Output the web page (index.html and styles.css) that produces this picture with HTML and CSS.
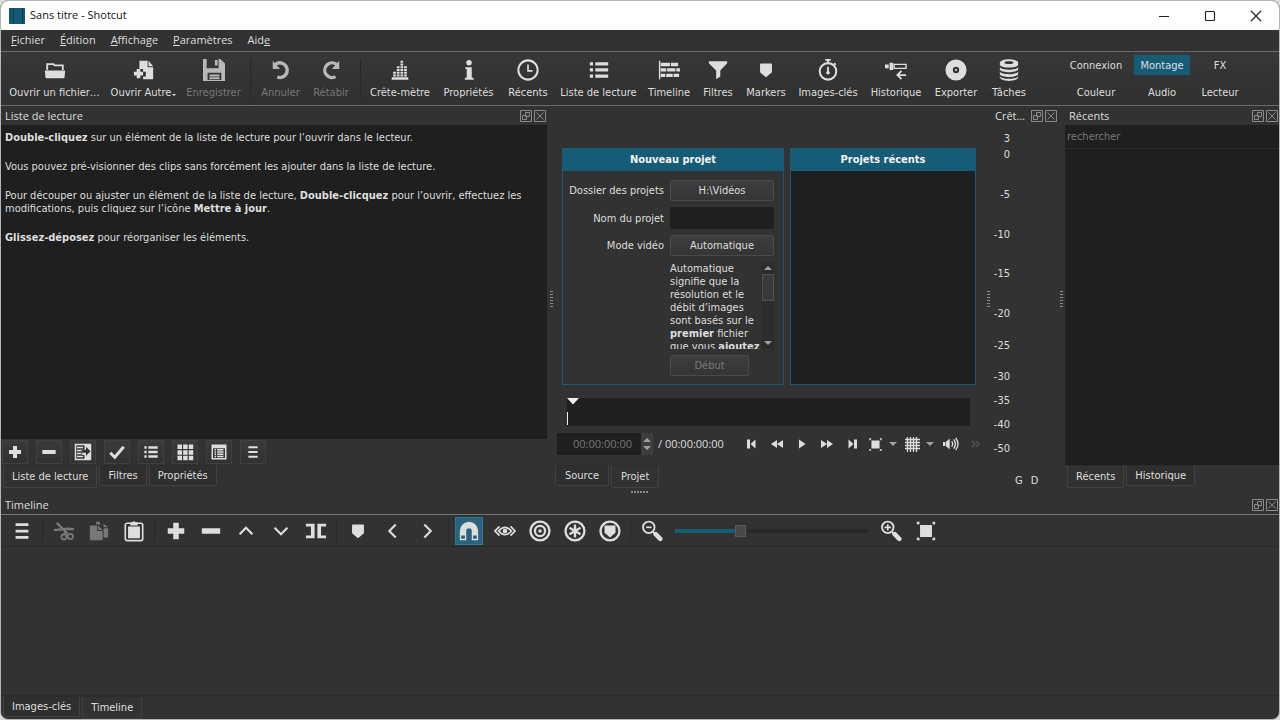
FILE: index.html
```html
<!DOCTYPE html>
<html lang="fr">
<head>
<meta charset="utf-8">
<title>Sans titre - Shotcut</title>
<link rel="stylesheet" href="styles.css">
</head>
<body>
<svg class="sprite" aria-hidden="true">
  <symbol id="float" viewBox="0 0 12 12"><path d="M.5.5h11v11H.5z M5.500 2.500h4v4h-4z M2.500 5.500h4v4h-4z" fill="none" stroke="currentColor"/></symbol>
  <symbol id="close" viewBox="0 0 12 12"><path d="M.5.5h11v11H.5z M2.500 2.500l7 7 M9.500 2.500l-7 7" fill="none" stroke="currentColor"/></symbol>
  <symbol id="plus" viewBox="0 0 24 24"><path d="M9 3h6v6h6v6h-6v6H9v-6H3V9h6z"/></symbol>
  <symbol id="minus" viewBox="0 0 24 24"><path d="M2 9h20v6H2z"/></symbol>
  <symbol id="bars" viewBox="0 0 24 24"><path d="M5 3.500h14v3H5z M5 10.500h14v3H5z M5 17.500h14v3H5z"/></symbol>
  <symbol id="list" viewBox="0 0 24 24"><path d="M2 3.500h3.500v3.500H2z M8 3.500h14v3.500H8z M2 10.200h3.500v3.500H2z M8 10.200h14v3.500H8z M2 17h3.500v3.500H2z M8 17h14v3.500H8z"/></symbol>
  <symbol id="marker" viewBox="0 0 24 24"><path d="M6.500 5h11a1 1 0 0 1 1 1v8.500L12 20l-6.500-5.500V6a1 1 0 0 1 1-1z"/></symbol>
  <symbol id="fit" viewBox="0 0 24 24"><path d="M5.500 5.500h13v13h-13z M2 2h3v2H4v1H2z M22 2h-3v2h1v1h2z M2 22h3v-2H4v-1H2z M22 22h-3v-2h1v-1h2z"/></symbol>
  <symbol id="dots" viewBox="0 0 3 18"><path d="M0 1h3v1H0z M0 4h3v1H0z M0 7h3v1H0z M0 10h3v1H0z M0 13h3v1H0z M0 16h3v1H0z"/></symbol>
</svg>
<div class="window">
  <header class="titlebar">
    <svg class="logo" viewBox="0 0 16 16"><path d="M0 0h16v16H0z" fill="#155a74"/><path d="M4.500 0v16 M13.500 0v16" stroke="#0d3a4c"/><path d="M1 3h2 M1 6h2 M1 9h2 M1 12h2" stroke="#0d3a4c"/></svg>
    <h1>Sans titre - Shotcut</h1>
    <div class="wincontrols">
      <button aria-label="Réduire"><svg viewBox="0 0 12 12"><path d="M1 6.500h10"/></svg></button>
      <button aria-label="Agrandir"><svg viewBox="0 0 12 12"><rect x="1.500" y="1.500" width="9" height="9" rx="1"/></svg></button>
      <button aria-label="Fermer"><svg viewBox="0 0 12 12"><path d="M1 1l10 10M11 1L1 11"/></svg></button>
    </div>
  </header>
  <nav class="menubar">
    <button><u>F</u>ichier</button><button><u>É</u>dition</button><button><u>A</u>ffichage</button><button><u>P</u>aramètres</button><button>Aid<u>e</u></button>
  </nav>
  <div class="toolbar">
    <div class="tools">
      <button><svg viewBox="0 0 24 24"><path d="M1 12.500h22l-.5 7a1.500 1.500 0 0 1-1.500 1.500H3a1.500 1.500 0 0 1-1.500-1.500z"/><path d="M3.500 12V5.500h7l1 1.500h9V12" fill="none" stroke="currentColor" stroke-width="2"/></svg>Ouvrir un fichier…</button>
      <button><svg viewBox="0 0 24 24"><path d="M7 2h9v7h6v13H11v-3h3v-5h-3v-3H7z M17 2l5 6h-5z M4 11h4v3h3v4H8v3H4v-3H1v-4h3z"/></svg><span>Ouvrir Autre<i class="more"></i></span></button>
      <button disabled><svg viewBox="0 0 24 24"><path d="M0 0h4v10H17V0h2l5 5v19h-4v-9H5v9H0z M13 1h3v6h-3z M7 17h11v2H7z M7 20h11v2H7z M5 23h15v1H5z"/></svg>Enregistrer</button>
      <span class="sep"></span>
      <button disabled><svg viewBox="0 0 24 24"><path d="M6 5.800A8 8 0 1 1 8 19.700" fill="none" stroke="currentColor" stroke-width="3.600"/><path d="M3 2v9h8z"/></svg>Annuler</button>
      <button disabled><svg viewBox="0 0 24 24"><path d="M18 5.800A8 8 0 1 0 17 19.200" fill="none" stroke="currentColor" stroke-width="3.600"/><path d="M21 2v9h-8z"/></svg>Rétabir</button>
      <span class="sep"></span>
      <button><svg viewBox="0 0 24 24"><path d="M3 20h18v2.500H3z"/><path d="M6 19V13 M10 19V8 M14 19V2 M18 19V7" stroke="currentColor" stroke-width="3" stroke-dasharray="2 1" fill="none"/></svg>Crête-mètre</button>
      <button><svg viewBox="0 0 24 24"><circle cx="12" cy="4" r="3"/><path d="M8 9h7v11.500H17v2H7.500v-2H9.500V11H8z"/></svg>Propriétés</button>
      <button><svg viewBox="0 0 24 24"><circle cx="12" cy="12" r="10.500" fill="none" stroke="currentColor" stroke-width="2.200"/><path d="M12 6v7h5" fill="none" stroke="currentColor" stroke-width="1.800"/></svg>Récents</button>
      <button><svg><use href="#list"/></svg>Liste de lecture</button>
      <button><svg viewBox="0 0 24 24"><path d="M1 2h1.500v20H1z M3 4h10v4H3z M14 4h8v4h-8z M3 10h6v3.500H3z M10 10h9v3.500h-9z M20 10h4v3.500h-4z M3 16h5v3.500H3z M9 16h7v3.500H9z M17 16h6v3.500h-6z"/></svg>Timeline</button>
      <button><svg viewBox="0 0 24 24"><path d="M2 2.500h20v2l-7.500 8V19L10 22V12.500L2 4.500z"/></svg>Filtres</button>
      <button><svg><use href="#marker"/></svg>Markers</button>
      <button><svg viewBox="0 0 24 24"><path d="M9 1h6 M12 1v4 M18.500 4.500l2 2" stroke="currentColor" stroke-width="2"/><circle cx="12" cy="13.500" r="9" fill="none" stroke="currentColor" stroke-width="2.200"/><path d="M12 8.500v6" stroke="currentColor" stroke-width="2"/><circle cx="12" cy="15" r="2"/></svg>Images-clés</button>
      <button><svg viewBox="0 0 24 24"><path d="M0 6h4v4H0z M5 4h4v8H5z"/><path d="M10 5.800h13v4.400H10z" fill="none" stroke="currentColor" stroke-width="1.500"/><path d="M23 17.500h-8 M18 13l-4.500 4.500L18 22" fill="none" stroke="currentColor" stroke-width="2"/></svg>Historique</button>
      <button><svg viewBox="0 0 24 24"><path fill-rule="evenodd" d="M12 .500a11.500 11.500 0 1 0 0 23a11.500 11.500 0 1 0 0-23z M12 8.500a3.500 3.500 0 1 1 0 7a3.500 3.500 0 1 1 0-7z"/><circle cx="12" cy="12" r="1.200"/></svg>Exporter</button>
      <button><svg viewBox="0 0 24 24"><path fill-rule="evenodd" d="M2 4.500c0-5.500 20-5.500 20 0v1.500c0 4.500-20 4.500-20 0z M7 4c0 2 10 2 10 0s-10-2-10 0z"/><path d="M2 9c2 3.500 18 3.500 20 0v2.500c-2 4-18 4-20 0z M2 14c2 3.500 18 3.500 20 0v2.500c-2 4-18 4-20 0z M2 19c2 3.500 18 3.500 20 0v1.500c-2 4.500-18 4.500-20 0z"/></svg>Tâches</button>
    </div>
    <div class="layouts">
      <button>Connexion</button><button class="on">Montage</button><button>FX</button>
      <button>Couleur</button><button>Audio</button><button>Lecteur</button>
    </div>
  </div>

  <main class="docks">
    <section class="dock">
      <div class="dockhead"><h2>Liste de lecture</h2><button aria-label="Détacher"><svg><use href="#float"/></svg></button><button aria-label="Fermer"><svg><use href="#close"/></svg></button></div>
      <div class="playlist">
        <p><b>Double-cliquez</b> sur un élément de la liste de lecture pour l’ouvrir dans le lecteur.</p>
        <p>Vous pouvez pré-visionner des clips sans forcément les ajouter dans la liste de lecture.</p>
        <p>Pour découper ou ajuster un élément de la liste de lecture, <b>Double-clicquez</b> pour l’ouvrir, effectuez les<br>modifications, puis cliquez sur l’icône <b>Mettre à jour</b>.</p>
        <p><b>Glissez-déposez</b> pour réorganiser les éléments.</p>
      </div>
      <div class="listbuttons">
        <button aria-label="Ajouter"><svg><use href="#plus"/></svg></button>
        <button aria-label="Retirer"><svg><use href="#minus"/></svg></button>
        <button aria-label="Mettre à jour"><svg viewBox="0 0 24 24"><path fill-rule="evenodd" d="M1 1h22v22H1z M3 3v18h11v-5h-3V9h3V3z"/><path d="M4 6h8 M4 10h6 M4 14h6 M4 18h8" stroke="currentColor" stroke-width="2"/><path d="M11 9h5V5l6 6-6 6v-4h-5z" fill="#323232"/></svg></button>
        <button aria-label="Valider"><svg viewBox="0 0 24 24"><path d="M3 13l6 6L21 5" fill="none" stroke="currentColor" stroke-width="4"/></svg></button>
        <button aria-label="Détails"><svg><use href="#list"/></svg></button>
        <button aria-label="Icônes"><svg viewBox="0 0 24 24"><path d="M2 2h6v6H2z M9.500 2h6v6h-6z M17 2h6v6h-6z M2 9.500h6v6H2z M9.500 9.500h6v6h-6z M17 9.500h6v6h-6z M2 17h6v6H2z M9.500 17h6v6h-6z M17 17h6v6h-6z"/></svg></button>
        <button aria-label="Tableau"><svg viewBox="0 0 24 24"><path fill-rule="evenodd" d="M2 2h20v20H2z M4 7v13h16V7z"/><path d="M6 9h2 M9.500 9H18 M6 12h2 M9.500 12H18 M6 15h2 M9.500 15H18 M6 18h2 M9.500 18H18" stroke="currentColor" stroke-width="2"/></svg></button>
        <button aria-label="Menu"><svg><use href="#bars"/></svg></button>
      </div>
      <div class="tabs"><button class="on">Liste de lecture</button><button>Filtres</button><button>Propriétés</button></div>
    </section>
    <div class="split"><svg><use href="#dots"/></svg></div>
    <section class="player">
      <div class="projects">
        <form class="card" onsubmit="return false">
          <h2>Nouveau projet</h2>
          <div class="fields">
            <label for="dir">Dossier des projets</label><button id="dir">H:\Vidéos</button>
            <label for="name">Nom du projet</label><input id="name" type="text">
            <label for="mode">Mode vidéo</label><button id="mode">Automatique</button>
            <div class="help">
              <p>Automatique<br>signifie que la<br>résolution et le<br>débit d’images<br>sont basés sur le<br><b>premier</b> fichier<br>que vous <b>ajoutez</b></p>
              <div class="scroll"><i class="up"></i><i class="thumb"></i><i class="down"></i></div>
            </div>
            <button class="start" disabled>Début</button>
          </div>
        </form>
        <div class="card recent"><h2>Projets récents</h2></div>
      </div>
      <div class="scrub"><svg viewBox="0 0 12 28"><path d="M0 0h12L6 6.500z M0 14h1v13H0z"/></svg></div>
      <div class="transport">
        <span class="time"><input type="text" value="00:00:00:00" aria-label="Position" disabled><span class="spin"><i class="up"></i><i class="down"></i></span></span>
        <span class="total">/ 00:00:00:00</span>
        <div class="play">
          <button aria-label="Début"><svg viewBox="0 0 12 12"><path d="M1 1.500h3v9H1z M4.500 6l5-4.500v9z"/></svg></button>
          <button aria-label="Retour rapide"><svg viewBox="0 0 12 12"><path d="M0 6l6-4v8z M6 6l6-4v8z"/></svg></button>
          <button aria-label="Lecture"><svg viewBox="0 0 12 12"><path d="M3 1.500L9.500 6 3 10.500z"/></svg></button>
          <button aria-label="Avance rapide"><svg viewBox="0 0 12 12"><path d="M12 6L6 2v8z M6 6L0 2v8z"/></svg></button>
          <button aria-label="Fin"><svg viewBox="0 0 12 12"><path d="M8 1.500h3v9H8z M7.500 6l-5-4.500v9z"/></svg></button>
          <button class="menu" aria-label="Zoom"><svg><use href="#fit"/></svg><i class="down"></i></button>
          <button class="menu" aria-label="Grille"><svg viewBox="0 0 15 15"><path d="M2.500 0v15 M5.500 0v15 M8.500 0v15 M11.500 0v15 M0 2.500h15 M0 5.500h15 M0 8.500h15 M0 11.500h15" stroke="currentColor" stroke-width="1.300"/></svg><i class="down"></i></button>
          <button class="vol" aria-label="Volume"><svg viewBox="0 0 24 24"><path d="M0 9h3v6H0z M4 9l6-5v16l-6-5z"/><path d="M13 8q3 4 0 8 M16 5q5 7 0 14 M19 3q7 9 0 18" fill="none" stroke="currentColor" stroke-width="2"/></svg></button>
          <button class="ext" aria-label="Plus" disabled><svg viewBox="0 0 12 12"><path d="M2 3l3 3-3 3 M6 3l3 3-3 3" fill="none" stroke="currentColor" stroke-width="1.500"/></svg></button>
        </div>
      </div>
      <div class="tabs"><button>Source</button><button class="on">Projet</button></div>
    </section>
    <div class="split"><svg><use href="#dots"/></svg></div>
    <section class="dock">
      <div class="dockhead"><h2>Crêt…</h2><button aria-label="Détacher"><svg><use href="#float"/></svg></button><button aria-label="Fermer"><svg><use href="#close"/></svg></button></div>
      <ul class="meter"><li>3</li><li>0</li><li>-5</li><li>-10</li><li>-15</li><li>-20</li><li>-25</li><li>-30</li><li>-35</li><li>-40</li><li>-50</li></ul>
      <div class="channels"><span>G</span><span>D</span></div>
    </section>
    <div class="split"><svg><use href="#dots"/></svg></div>
    <section class="dock">
      <div class="dockhead"><h2>Récents</h2><button aria-label="Détacher"><svg><use href="#float"/></svg></button><button aria-label="Fermer"><svg><use href="#close"/></svg></button></div>
      <input class="search" type="search" placeholder="rechercher" aria-label="rechercher">
      <div class="recentlist"></div>
      <div class="tabs"><button class="on">Récents</button><button>Historique</button></div>
    </section>
  </main>
  <div class="hsplit"><i></i></div>

  <section class="timeline">
    <div class="dockhead"><h2>Timeline</h2><button aria-label="Détacher"><svg><use href="#float"/></svg></button><button aria-label="Fermer"><svg><use href="#close"/></svg></button></div>
    <div class="tltools">
      <button aria-label="Menu"><svg><use href="#bars"/></svg></button>
      <span class="sep"></span>
      <button aria-label="Couper" disabled><svg viewBox="0 0 24 24"><path d="M4 3l12 12 M1 11l15-1.500 7 .5" fill="none" stroke="currentColor" stroke-width="2.600"/><path d="M14 11l-2 5" stroke="currentColor" stroke-width="2"/><circle cx="12" cy="18.500" r="2.800" fill="none" stroke="currentColor" stroke-width="2"/><circle cx="19" cy="18" r="2.800" fill="none" stroke="currentColor" stroke-width="2"/></svg></button>
      <button aria-label="Copier" disabled><svg viewBox="0 0 24 24"><path d="M2 6h8v6h6v10H2z M11 6l5 5h-5z M9 2h4v3H9z M17 9h5v10h-5z M17 4l5 4h-5z"/></svg></button>
      <button aria-label="Coller"><svg viewBox="0 0 24 24"><rect x="2.500" y="3.500" width="19" height="19" rx="2" fill="none" stroke="currentColor" stroke-width="1.800"/><path d="M5.500 7h13v13h-13z M8 2.500h2.500a1.600 1.600 0 0 1 3 0H16V6H8z"/></svg></button>
      <span class="sep"></span>
      <button aria-label="Ajouter"><svg><use href="#plus"/></svg></button>
      <button aria-label="Retirer"><svg><use href="#minus"/></svg></button>
      <button aria-label="Lever"><svg class="line" viewBox="0 0 24 24"><path d="M5 15.500l7-7 7 7"/></svg></button>
      <button aria-label="Écraser"><svg class="line" viewBox="0 0 24 24"><path d="M5 8.500l7 7 7-7"/></svg></button>
      <button aria-label="Scinder"><svg viewBox="0 0 24 24"><path d="M1 4h9.500v16H1v-3h5.500V7H1z M23 4h-9.500v16H23v-3h-5.500V7H23z"/></svg></button>
      <span class="sep"></span>
      <button aria-label="Marqueur"><svg><use href="#marker"/></svg></button>
      <button aria-label="Précédent"><svg class="line" viewBox="0 0 24 24"><path d="M15 5l-7 7 7 7"/></svg></button>
      <button aria-label="Suivant"><svg class="line" viewBox="0 0 24 24"><path d="M8 5l7 7-7 7"/></svg></button>
      <span class="sep"></span>
      <button class="on" aria-label="Magnétisme"><svg viewBox="0 0 24 24"><path fill-rule="evenodd" d="M2 22V12a10 10 0 0 1 20 0v10h-7V12a3 3 0 0 0-6 0v10z M3.500 17v3.500h4V17z M16.500 17v3.500h4V17z"/></svg></button>
      <button aria-label="Survol"><svg viewBox="0 0 24 24"><path d="M5 12q7-8 14 0q-7 8-14 0z M6 7l-5 5 5 5 M18 7l5 5-5 5" fill="none" stroke="currentColor" stroke-width="1.900"/><circle cx="12" cy="12" r="2.500"/></svg></button>
      <button aria-label="Propagation"><svg viewBox="0 0 24 24"><g fill="none" stroke="currentColor" stroke-width="2.500"><circle cx="12" cy="12" r="10.300"/><circle cx="12" cy="12" r="5.500"/></g><circle cx="12" cy="12" r="2"/></svg></button>
      <button aria-label="Toutes les pistes"><svg viewBox="0 0 24 24"><circle cx="12" cy="12" r="10.300" fill="none" stroke="currentColor" stroke-width="2.500"/><path d="M12 5v14 M6 8.500l12 7 M18 8.500l-12 7" stroke="currentColor" stroke-width="2.600"/></svg></button>
      <button aria-label="Marqueurs"><svg viewBox="0 0 24 24"><circle cx="12" cy="12" r="10.300" fill="none" stroke="currentColor" stroke-width="2.500"/><path d="M6 6h12v8l-6 5-6-5z"/></svg></button>
      <span class="sep"></span>
      <button aria-label="Zoom arrière"><svg viewBox="0 0 24 24"><circle cx="8.500" cy="8" r="6.300" fill="none" stroke="currentColor" stroke-width="2"/><path d="M5.500 8h6" stroke="currentColor" stroke-width="1.800"/><path d="M13 13l3 3" stroke="currentColor" stroke-width="2"/><path d="M16 15.500l5 5" stroke="currentColor" stroke-width="5" stroke-linecap="round"/></svg></button>
      <input type="range" min="0" max="100" value="33" aria-label="Zoom">
      <button aria-label="Zoom avant"><svg viewBox="0 0 24 24"><circle cx="8.500" cy="8" r="6.300" fill="none" stroke="currentColor" stroke-width="2"/><path d="M5 8h7 M8.500 4.500v7" stroke="currentColor" stroke-width="1.800"/><path d="M13 13l3 3" stroke="currentColor" stroke-width="2"/><path d="M16 15.500l5 5" stroke="currentColor" stroke-width="5" stroke-linecap="round"/></svg></button>
      <button aria-label="Ajuster"><svg><use href="#fit"/></svg></button>
    </div>
    <div class="tracks"></div>
    <div class="tabs"><button>Images-clés</button><button class="on">Timeline</button></div>
  </section>
</div>
</body>
</html>
```
FILE: styles.css
```css
:root {
  --bg: #323232;
  --dark: #1f1f1f;
  --text: #dedede;
  --dim: #787878;
  --accent: #175c77;
  --line: #6b6b6b;
}
* { box-sizing: border-box; }
body {
  margin: 0;
  background: #dcdcdc;
  color: var(--text);
  font: 11px/13px "DejaVu Sans Condensed", "Noto Sans", sans-serif;
}
button, input { margin: 0; padding: 0; border: 0; background: none; color: inherit; font: inherit; }
button { display: flex; align-items: center; justify-content: center; white-space: nowrap; }
button:disabled { color: var(--dim); }
svg { display: block; fill: currentColor; flex: none; }
h1, h2, p, ul { margin: 0; padding: 0; font: inherit; list-style: none; }
.sprite { position: absolute; width: 0; height: 0; }
.window {
  display: flex; flex-direction: column; height: 100vh;
  background: var(--bg); border: 1px solid #b5b5b5; border-radius: 8px; overflow: hidden;
}

.titlebar { display: flex; align-items: center; gap: 5px; height: 29px; padding-left: 8px; background: #fff; color: #111; font: 12px/16px "Open Sans", sans-serif; }
.titlebar h1 { padding-bottom: 2px; font-size: 11px; }
.logo { width: 16px; height: 16px; }
.wincontrols { display: flex; margin-left: auto; }
.wincontrols button { width: 46px; height: 28px; }
.wincontrols svg { width: 12px; height: 12px; fill: none; stroke: #222; stroke-width: 1.200; }

.menubar { display: flex; align-items: flex-start; gap: 15px; height: 22px; padding: 1px 10px; border-bottom: 1px solid var(--line); font: 11px/18px "Open Sans", sans-serif; }

.toolbar { display: flex; justify-content: space-between; align-items: center; height: 54px; padding: 0 37px 0 3px; border-bottom: 1px solid var(--line); background: linear-gradient(#373737, #303030); }
.tools { display: grid; grid-template-columns: 101px 77px 63px 10px 51px 50px 8px 72px 65px 54px 87px 54px 44px 52px 72px 64px 56px 50px; }
.tools button { flex-direction: column; gap: 5px; }
.tools button:disabled svg { color: #b8b8b8; }
.tools svg { width: 22px; height: 22px; }
.sep { justify-self: center; width: 1px; background: #292929; }
.more, .up, .down { display: inline-block; border: 4px solid transparent; }
.more { margin-left: 1px; border-width: 2px 2px 0; border-top-color: currentColor; }
.layouts { display: grid; grid-template-columns: 60px 72px 44px; row-gap: 7px; }
.layouts button { height: 20px; justify-self: center; padding: 0 6px; }
.layouts .on { background: var(--accent); }

.docks { display: grid; grid-template-columns: minmax(0, 546fr) 8px minmax(0, 430fr) 6px 67px 7px 214px; height: 382px; }
.dock, .player { display: flex; flex-direction: column; min-width: 0; }
.dockhead { display: flex; align-items: center; gap: 2px; flex: none; height: 19px; padding: 0 1px 0 4px; }
.dockhead h2 { margin-right: auto; font: 11px/16px "Open Sans", sans-serif; }
.dockhead button { color: #8a8a8a; }
.dockhead svg { width: 12px; height: 12px; }
.playlist { flex: 1; padding: 6px 4px; background: var(--dark); }
.playlist p { margin-bottom: 16px; }
.listbuttons { display: flex; gap: 8px; padding: 1px; }
.listbuttons button { width: 26px; height: 24px; border: 1px solid #404040; background: linear-gradient(#3a3a3a, #313131); }
.listbuttons svg { width: 18px; height: 18px; }
.listbuttons svg:has(use) { width: 16px; height: 16px; }
.tabs { display: flex; align-items: flex-start; flex: none; gap: 2px; height: 23px; padding-left: 2px; }
.tabs button { height: 21px; padding: 0 8px; border: 1px solid #414141; border-top-color: #2b2b2b; border-radius: 0 0 2px 2px; background: #2f2f2f; }
.tabs .on { height: 23px; background: var(--bg); }
.split { display: flex; align-items: center; justify-content: center; padding-top: 4px; color: #8a8a8a; }
.split svg { width: 3px; height: 18px; }
.hsplit { display: flex; justify-content: center; align-items: center; height: 7px; }
.hsplit i { width: 18px; height: 2px; background: repeating-linear-gradient(90deg, #8a8a8a 0 2px, transparent 2px 3px); }

.player { padding: 42px 0 0; }
.projects { display: grid; grid-template-columns: 222px minmax(0, 186px); gap: 6px; height: 237px; margin: 0 7px; }
.card { border: 1px solid var(--accent); }
.card h2 { background: var(--accent); color: #f4f4f4; text-align: center; font-weight: bold; line-height: 22px; }
.recent { background: var(--dark); }
.fields { display: grid; grid-template-columns: 101px 104px; column-gap: 6px; row-gap: 6px; padding: 9px 0 0; align-items: center; }
.fields label { text-align: right; }
.fields button { height: 21px; border: 1px solid #4a4a4a; border-radius: 2px; background: linear-gradient(#3d3d3d, #353535); }
.fields input { width: 104px; height: 22px; background: var(--dark); border-radius: 2px; }
.help { grid-column: 2; display: flex; justify-content: space-between; height: 87px; overflow: hidden; white-space: nowrap; }
.scroll { display: flex; flex-direction: column; align-items: center; width: 13px; flex: none; background: #2c2c2c; }
.scroll .up, .scroll .down { margin: 4px 0; }
.up { border-width: 0 4px 4px; border-bottom-color: #a0a0a0; }
.down { border-width: 4px 4px 0; border-top-color: #a0a0a0; }
.scroll .thumb { width: 12px; height: 27px; border: 1px solid #505050; background: #393939; }
.scroll .down { margin-top: auto; }
.fields .start { grid-column: 2; width: 79px; }
.scrub { flex: none; height: 28px; margin: 13px 15px 0 12px; background: var(--dark); color: #f0f0f0; }
.scrub svg { width: 12px; height: 28px; }
.transport { display: flex; align-items: center; flex: none; height: 22px; margin-top: 7px; padding-left: 2px; font: 11px/14px "Open Sans", sans-serif; }
.time { display: flex; width: 96px; height: 22px; background: var(--dark); }
.time input { flex: 1; min-width: 0; padding-right: 9px; text-align: right; color: var(--dim); }
.spin { display: flex; flex-direction: column; justify-content: center; align-items: center; gap: 4px; width: 12px; background: #3d3d3d; }
.total { flex: none; width: 86px; padding-left: 5px; }
.play { display: flex; flex: none; }
.play button { width: 25px; }
.play svg { width: 12px; height: 12px; }
.play .menu { width: 37px; gap: 6px; }
.play .menu svg { width: 15px; height: 15px; }
.play .vol svg { width: 16px; height: 16px; }
.play .ext { color: #505050; }
.player .tabs { margin: 10px 0 auto; padding-left: 0; }
.player .tabs button { padding: 0 9px; }

.meter { display: grid; grid-template-rows: 22px 16px 40px 40px 39px 40px 32px 31px 24px 24px 24px; width: 19px; }
.meter li { align-self: end; text-align: right; line-height: 16px; }
.channels { display: flex; gap: 8px; margin-top: 17px; padding-left: 24px; }
.search { height: 24px; padding: 0 2px; background: var(--dark); border-bottom: 1px solid #2b2b2b; outline: 0; }
.search::placeholder { color: var(--dim); opacity: 1; }
.recentlist { flex: 1; background: var(--dark); }

.timeline { display: flex; flex-direction: column; flex: 1; min-height: 0; }
.tltools { display: flex; align-items: center; flex: none; height: 33px; padding-left: 3px; border-top: 1px solid #767676; border-bottom: 1px solid #292929; }
.tltools button { width: 35px; height: 28px; }
.tltools svg { width: 22px; height: 22px; }
.tltools .sep { height: 24px; margin: 0 3px; }
.tltools .line { fill: none; stroke: currentColor; stroke-width: 2.300; }
.tltools .on { width: 28px; margin: 0 4px 0 3px; background: #2a637b; border: 1px solid #2f7896; }
.tltools input { appearance: none; width: 193px; height: 12px; margin: 0 5px 0 6px; background: linear-gradient(90deg, var(--accent) 34%, #292929 34%) center / 100% 4px no-repeat; }
.tltools input::-webkit-slider-thumb { appearance: none; width: 11px; height: 12px; background: #484848; border: 1px solid #585858; }
.tracks { flex: 1; border-bottom: 1px solid #2b2b2b; }
```
